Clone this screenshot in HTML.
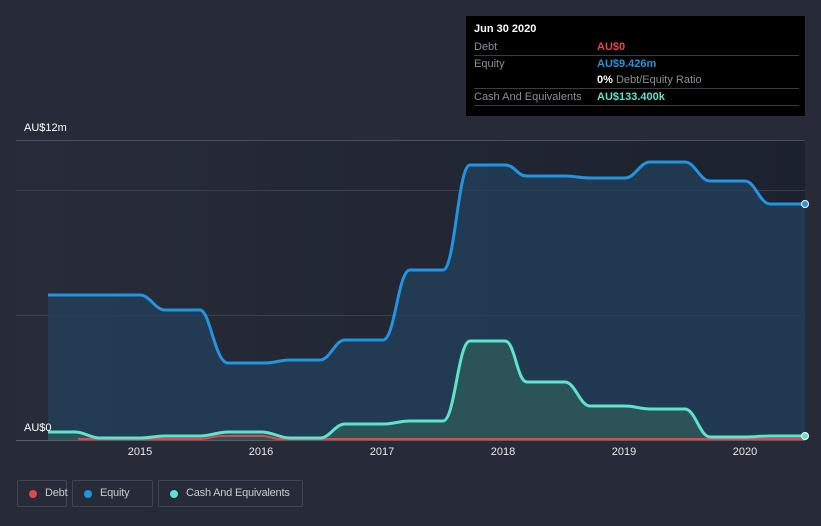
<!DOCTYPE html><html><head><style>
body{margin:0;width:821px;height:526px;background:#262b37;font-family:"Liberation Sans",sans-serif;overflow:hidden;position:relative}
.t{position:absolute;left:466px;top:16px;width:339px;height:100px;background:#000;font-size:11px}
.r{position:absolute;left:8px;width:325px;border-bottom:1px solid #3a3d44;height:16px;line-height:16px;color:#8a8e96}
.v{position:absolute;left:123px;font-weight:bold}
.lg{position:absolute;top:480px;height:27px;border:1px solid #3f4552;border-radius:2px;color:#c8cbd0;font-size:11px;line-height:25px;box-sizing:border-box;padding-left:27px;white-space:nowrap;letter-spacing:-0.2px}
.lg i{position:absolute;left:11px;top:9px;width:8px;height:8px;border-radius:50%}
.x{position:absolute;top:446px;color:#e6e8ea;font-size:11px;transform:translateX(-50%)}
</style></head><body>
<svg width="821" height="526" style="position:absolute;left:0;top:0">
<defs><linearGradient id="bg" x1="0" x2="1"><stop offset="0" stop-color="#272c38"/><stop offset="1" stop-color="#1b212d"/></linearGradient></defs>
<rect x="16" y="140" width="789" height="300" fill="url(#bg)"/>
<line x1="16" y1="140.5" x2="805" y2="140.5" stroke="#4a4f5a"/>
<line x1="16" y1="190.5" x2="805" y2="190.5" stroke="#3a404b"/>
<line x1="16" y1="315.5" x2="805" y2="315.5" stroke="#3a404b"/>
<path d="M48,295 L140,295 C150,295 155,310 165,310 L200,310 C210,310 215,363 228,363 L265,363 C275,363 280,360 290,360 L320,360 C330,360 335,340 345,340 L383,340 C395,340 398,270 410,270 L443,270 C455,270 458,165 470,165 L505,165 C515,165 517,176 527,176 L565,176 C575,176 580,178 590,178 L625,178 C635,178 640,162 650,162 L685,162 C695,162 700,181 710,181 L745,181 C755,181 760,204 770,204 L805,204 L805,440 L48,440Z" fill="#23405a" fill-opacity=".8"/>
<path d="M48,295 L140,295 C150,295 155,310 165,310 L200,310 C210,310 215,363 228,363 L265,363 C275,363 280,360 290,360 L320,360 C330,360 335,340 345,340 L383,340 C395,340 398,270 410,270 L443,270 C455,270 458,165 470,165 L505,165 C515,165 517,176 527,176 L565,176 C575,176 580,178 590,178 L625,178 C635,178 640,162 650,162 L685,162 C695,162 700,181 710,181 L745,181 C755,181 760,204 770,204 L805,204" fill="none" stroke="#2394df" stroke-width="3"/>
<path d="M48,432 L75,432 C85,432 90,438 100,438 L140,438 C150,438 155,436 165,436 L200,436 C210,436 218,432 228,432 L262,432 C272,432 280,438 290,438 L320,438 C330,438 335,424 345,424 L383,424 C395,424 398,421 410,421 L443,421 C455,421 458,341 470,341 L505,341 C515,341 517,382 527,382 L565,382 C575,382 580,406 590,406 L625,406 C635,406 640,409 650,409 L685,409 C695,409 700,437 710,437 L745,437 C755,437 760,436 770,436 L805,436 L805,440 L48,440Z" fill="#2f5a5a" fill-opacity=".8"/>
<path d="M78,439 L200,439 C210,439 212,436 222,436 L262,436 C270,436 272,439 280,439 L805,439" fill="none" stroke="#e2474b" stroke-width="2"/>
<path d="M48,432 L75,432 C85,432 90,438 100,438 L140,438 C150,438 155,436 165,436 L200,436 C210,436 218,432 228,432 L262,432 C272,432 280,438 290,438 L320,438 C330,438 335,424 345,424 L383,424 C395,424 398,421 410,421 L443,421 C455,421 458,341 470,341 L505,341 C515,341 517,382 527,382 L565,382 C575,382 580,406 590,406 L625,406 C635,406 640,409 650,409 L685,409 C695,409 700,437 710,437 L745,437 C755,437 760,436 770,436 L805,436" fill="none" stroke="#5ee3cf" stroke-width="3"/>
<line x1="16" y1="440.5" x2="805" y2="440.5" stroke="#5a5f6a"/>
<circle cx="805" cy="204" r="3.5" fill="#2394df" stroke="#fff" stroke-width="1"/>
<circle cx="805" cy="436" r="3.5" fill="#5ee3cf" stroke="#fff" stroke-width="1"/>
</svg>
<div style="position:absolute;left:24px;top:122px;color:#fff;font-size:11px">AU$12m</div>
<div style="position:absolute;left:24px;top:422px;color:#fff;font-size:11px">AU$0</div>
<div class="x" style="left:140px">2015</div><div class="x" style="left:261px">2016</div><div class="x" style="left:382px">2017</div><div class="x" style="left:503px">2018</div><div class="x" style="left:624px">2019</div><div class="x" style="left:745px">2020</div>
<div class="t">
<div style="position:absolute;left:8px;top:7px;color:#fff;font-weight:bold;font-size:11px">Jun 30 2020</div>
<div class="r" style="top:23px">Debt<span class="v" style="color:#e2474b">AU$0</span></div>
<div class="r" style="top:40px;border:none">Equity<span class="v" style="color:#2394df">AU$9.426m</span></div>
<div class="r" style="top:56px"><span class="v" style="color:#fff">0% <span style="color:#8a8e96;font-weight:normal">Debt/Equity Ratio</span></span></div>
<div class="r" style="top:73px">Cash And Equivalents<span class="v" style="color:#5ee3cf">AU$133.400k</span></div>
</div>
<div class="lg" style="left:17px;width:50px"><i style="background:#e2474b"></i>Debt</div>
<div class="lg" style="left:72px;width:81px"><i style="background:#2394df"></i>Equity</div>
<div class="lg" style="left:158px;width:145px"><i style="background:#5ee3cf"></i>Cash And Equivalents</div>
</body></html>
